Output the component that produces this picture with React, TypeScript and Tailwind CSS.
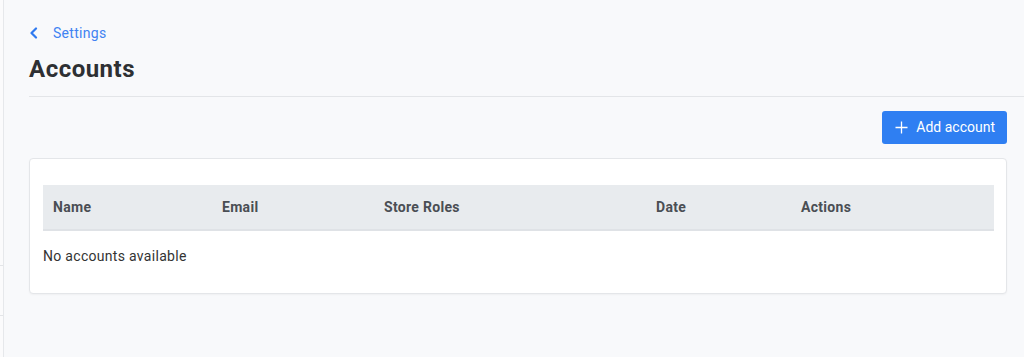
import React from "react";

export default function App() {
  const font = { fontFamily: "Roboto, 'Liberation Sans', sans-serif" };
  return (
    <div className="flex min-h-[357px] w-full bg-[#f8f9fb] text-[#333] tracking-[0.3px]" style={font}>
      <div className="relative w-[4px] shrink-0 border-r border-[#e6e8eb] bg-[#fbfbfc]">
        <div className="absolute left-0 top-[265px] h-px w-[3px] bg-[#e3e5e8]" />
        <div className="absolute left-0 top-[315px] h-px w-[3px] bg-[#e3e5e8]" />
      </div>
      <div className="flex-1 pl-[25px] pr-[17px] pt-[23px]">
        <a className="flex h-[20px] items-center gap-[15px] text-[14px] text-[#3f83f2]">
          <svg width="9" height="12" viewBox="0 0 9 12" fill="none">
            <path d="M7 1.5 2.5 6 7 10.5" stroke="#2f7af0" strokeWidth="2.2" strokeLinecap="round" strokeLinejoin="round" />
          </svg>
          <span>Settings</span>
        </a>
        <h1 className="mt-[12px] text-[24px] font-bold leading-[28px] tracking-[0.5px] text-[#2e3033]">Accounts</h1>
        <div className="mr-[-17px] mt-[13px] h-px bg-[#e3e5e8]" />
        <div className="mt-[14px] flex justify-end">
          <button className="flex h-[33px] items-center gap-[8px] rounded-[3px] bg-[#2f7ff2] pl-[13px] pr-[12px] text-[14px] tracking-normal text-white">
            <svg width="13" height="13" viewBox="0 0 13 13">
              <path d="M6.5 0.5v12M0.5 6.5h12" stroke="white" strokeWidth="1.3" />
            </svg>
            <span>Add account</span>
          </button>
        </div>
        <div className="mt-[14px] rounded-[4px] border border-[#e4e6e9] bg-white pb-[27px] pl-[13px] pr-[12px] pt-[26px] shadow-[0_1px_2px_rgba(0,0,0,0.04)]">
          <table className="w-full table-fixed border-collapse text-[14px]">
            <thead>
              <tr className="h-[45px] border-b-2 border-[#dfe2e6] bg-[#e8ebee] text-left font-bold text-[#4a4e54]">
                <th className="w-[169px] pl-[10px] font-bold">Name</th>
                <th className="w-[162px] pl-[10px] font-bold">Email</th>
                <th className="w-[272px] pl-[10px] font-bold">Store Roles</th>
                <th className="w-[145px] pl-[10px] font-bold">Date</th>
                <th className="pl-[10px] font-bold">Actions</th>
              </tr>
            </thead>
          </table>
          <div className="mt-[15px] text-[14px] leading-[20px] text-[#333]">No accounts available</div>
        </div>
      </div>
    </div>
  );
}
